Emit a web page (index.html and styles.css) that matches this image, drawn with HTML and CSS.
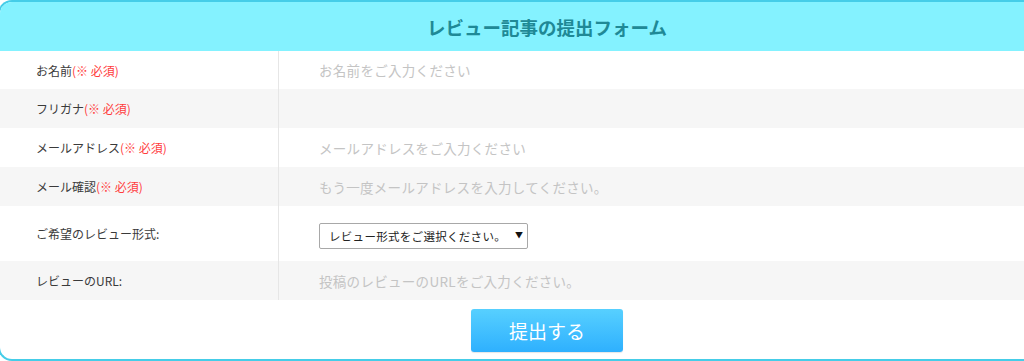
FILE: index.html
```html
<!DOCTYPE html>
<html lang="ja">
  <head>
    <meta charset="UTF-8" />
    <meta name="viewport" content="width=device-width, initial-scale=1.0" />
    <title>レビュー記事の提出フォーム</title>
    <link rel="stylesheet" href="styles.css">
  </head>
  <body>
    <main class="page">
      <form class="review-form">
        <header class="form-head">
          <h2>レビュー記事の提出フォーム</h2>
        </header>
        <div class="row">
          <label class="label">お名前<span class="req">(※ 必須)</span></label>
          <div class="field"><input type="text" placeholder="お名前をご入力ください"></div>
        </div>
        <div class="row alt">
          <label class="label">フリガナ<span class="req">(※ 必須)</span></label>
          <div class="field"><input type="text"></div>
        </div>
        <div class="row">
          <label class="label">メールアドレス<span class="req">(※ 必須)</span></label>
          <div class="field"><input type="email" placeholder="メールアドレスをご入力ください"></div>
        </div>
        <div class="row alt">
          <label class="label">メール確認<span class="req">(※ 必須)</span></label>
          <div class="field"><input type="email" placeholder="もう一度メールアドレスを入力してください。"></div>
        </div>
        <div class="row tall">
          <label class="label">ご希望のレビュー形式:</label>
          <div class="field">
            <div class="select-wrap">
              <select>
                <option>レビュー形式をご選択ください。</option>
              </select>
              <span class="arrow">▼</span>
            </div>
          </div>
        </div>
        <div class="row alt">
          <label class="label">レビューのURL:</label>
          <div class="field"><input type="url" placeholder="投稿のレビューのURLをご入力ください。"></div>
        </div>
        <div class="actions">
          <button type="button">提出する</button>
        </div>
      </form>
    </main>
  </body>
</html>
```
FILE: styles.css
```css
body {
  margin: 0;
  padding: 0;
  background: #fff;
  font-family: "Noto Sans CJK JP", "Noto Sans", sans-serif;
  color: #333;
  overflow: hidden;
}
.page {
  width: 1024px;
  height: 361px;
  overflow: hidden;
}
.review-form {
  width: 1060px;
  margin-left: -2px;
  height: 361px;
  box-sizing: border-box;
  border: 2px solid #45cde8;
  border-right: none;
  border-radius: 14px 0 0 14px;
  overflow: hidden;
  background: #fff;
}
.form-head {
  height: 49px;
  background: #84f2ff;
  display: flex;
  justify-content: center;
  align-items: center;
}
.form-head h2 {
  margin: 0 0 0 36px;
  font-size: 18.5px;
  font-weight: bold;
  color: #1f8996;
}
.row {
  display: grid;
  grid-template-columns: 279px 1fr;
  height: 38px;
}
.row:nth-of-type(3),
.row.alt {
  height: 39px;
}
.row.alt {
  background: #f6f6f6;
}
.row.tall {
  height: 55px;
}
.label {
  display: flex;
  align-items: center;
  padding-left: 36px;
  font-size: 12px;
  color: #3a3a3a;
  border-right: 1px solid #e6e6e6;
}
.req {
  color: #ff3d3d;
}
.field {
  display: flex;
  align-items: center;
  padding-left: 40px;
}
.field input {
  width: 600px;
  border: none;
  outline: none;
  background: transparent;
  padding: 0;
  font-family: inherit;
  font-size: 13.5px;
  letter-spacing: 0.3px;
  color: #333;
}
.field input::placeholder {
  color: #c4c4c4;
}
.select-wrap {
  position: relative;
  width: 209px;
  height: 26px;
  margin-top: 2px;
}
.select-wrap select {
  appearance: none;
  width: 100%;
  height: 100%;
  border: 1px solid #a8a8a8;
  border-radius: 2px;
  background: #fff;
  padding: 0 0 0 9px;
  font-family: inherit;
  font-size: 11.5px;
  letter-spacing: 0.3px;
  color: #222;
}
.arrow {
  position: absolute;
  right: 5px;
  top: 7px;
  font-size: 8px;
  color: #111;
  pointer-events: none;
}
.actions {
  display: flex;
  justify-content: center;
  padding-top: 9px;
}
.actions button {
  width: 152px;
  height: 43px;
  margin-left: 36px;
  border: none;
  border-radius: 3px;
  background: linear-gradient(to bottom, #57d0ff, #2eb0fe);
  color: #fff;
  font-family: inherit;
  font-size: 19px;
  box-shadow: 0 1px 1px rgba(0, 0, 0, 0.1);
}
```
